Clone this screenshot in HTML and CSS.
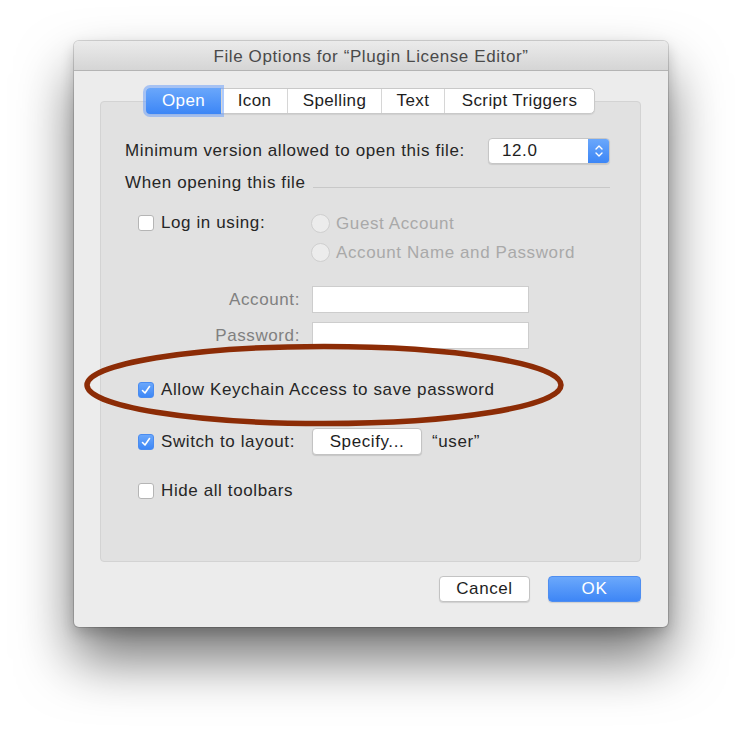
FILE: index.html
```html
<!DOCTYPE html>
<html>
<head>
<meta charset="utf-8">
<link rel="stylesheet" href="styles.css">
</head>
<body>
<div class="window">
  <div class="titlebar">File Options for “Plugin License Editor”</div>
  <div class="wbody">
    <div class="tabs">
      <span class="tab sel">Open</span><span class="tab">Icon</span><span class="tab">Spelling</span><span class="tab">Text</span><span class="tab">Script Triggers</span>
    </div>
    <div class="tabbox">
      <div class="row r-min">
        <span class="lbl">Minimum version allowed to open this file:</span>
        <span class="popup"><span class="pv">12.0</span><span class="stepper"><svg width="10" height="14" viewBox="0 0 10 14"><path d="M2 5 L5 2 L8 5 M2 9 L5 12 L8 9" fill="none" stroke="#fff" stroke-width="1.4" stroke-linecap="round" stroke-linejoin="round"/></svg></span></span>
      </div>
      <div class="row r-when"><span class="lbl">When opening this file</span><span class="sep"></span></div>
      <div class="r-login">
        <div class="cbrow"><span class="cb"></span><span class="lbl">Log in using:</span></div>
        <div class="radios">
          <div class="radrow"><span class="radio"></span><span class="dis">Guest Account</span></div>
          <div class="radrow"><span class="radio"></span><span class="dis">Account Name and Password</span></div>
        </div>
      </div>
      <div class="field-row r-acc"><span class="flbl">Account:</span><span class="field"></span></div>
      <div class="field-row r-pw"><span class="flbl">Password:</span><span class="field"></span></div>
      <div class="cbrow r-key"><span class="cb on"><svg width="12" height="12" viewBox="0 0 12 12"><path d="M2.5 6.5 L5 9 L9.5 2.5" fill="none" stroke="#fff" stroke-width="1.6" stroke-linecap="round" stroke-linejoin="round"/></svg></span><span class="lbl">Allow Keychain Access to save password</span></div>
      <div class="cbrow r-switch"><span class="cb on"><svg width="12" height="12" viewBox="0 0 12 12"><path d="M2.5 6.5 L5 9 L9.5 2.5" fill="none" stroke="#fff" stroke-width="1.6" stroke-linecap="round" stroke-linejoin="round"/></svg></span><span class="lbl sw">Switch to layout:</span><span class="btn spec">Specify...</span><span class="lbl user">“user”</span></div>
      <div class="cbrow r-hide"><span class="cb"></span><span class="lbl">Hide all toolbars</span></div>
    </div>
    <div class="buttons">
      <span class="btn cancel">Cancel</span>
      <span class="btn ok">OK</span>
    </div>
  </div>
  <svg class="oval" width="500" height="100" viewBox="0 0 500 100"><ellipse cx="250" cy="50" rx="237" ry="38.5" fill="none" stroke="#8c2c06" stroke-width="5.5"/></svg>
</div>
</body>
</html>
```

FILE: styles.css
```css
html { min-height: 100%; background: #fff; }
body {
  margin: 0;
  padding: 0 0 1px;
  min-height: 733px;
  box-sizing: border-box;
  background: #fff;
  font-family: "Liberation Sans", Arial, sans-serif;
  font-size: 17px;
  color: #262626;
  letter-spacing: 0.6px;
}
.window {
  position: relative;
  margin: 41px 0 0 74px;
  width: 594px;
  height: 586px;
  background: #ececec;
  border-radius: 5px;
  box-shadow: 0 0 0 1px rgba(0,0,0,0.14), 0 32px 55px rgba(0,0,0,0.55), 0 6px 14px rgba(0,0,0,0.18);
}
.titlebar {
  height: 29px;
  line-height: 31px;
  text-align: center;
  color: #4a4a4a;
  font-size: 17px;
  letter-spacing: 0.6px;
  background: linear-gradient(#ebebeb, #d5d5d5);
  border-bottom: 1px solid #b4b4b4;
  border-radius: 5px 5px 0 0;
}
.wbody { padding: 17px 27px 0 26px; }
.tabs {
  position: relative;
  z-index: 1;
  display: flex;
  width: max-content;
  margin: 0 auto 0 46px;
  height: 24px;
  background: #fff;
  border: 1px solid #c9c9c9;
  border-radius: 5px;
  box-shadow: 0 1px 1px rgba(0,0,0,0.08);
  letter-spacing: 0.4px;
}
.tab {
  display: flex;
  align-items: center;
  justify-content: center;
  height: 24px;
  border-left: 1px solid #d6d6d6;
  color: #1e1e1e;
}
.tab:first-child { border-left: none; }
.tab:nth-child(1) { width: 75px; }
.tab:nth-child(2) { width: 65px; }
.tab:nth-child(3) { width: 93px; }
.tab:nth-child(4) { width: 62px; }
.tab:nth-child(5) { width: 149px; }
.tab.sel {
  color: #fff;
  background: linear-gradient(#6aa7fb, #3c86f6);
  border-radius: 4px 0 0 4px;
  box-shadow: 0 0 0 3px rgba(110,160,250,0.55);
  margin: -1px 0 -1px -1px;
  height: 26px;
}
.tabbox {
  margin-top: -13px;
  width: 541px;
  box-sizing: border-box;
  height: 461px;
  background: #e1e1e1;
  border: 1px solid #d3d3d3;
  border-radius: 4px;
  padding: 36px 30px 0 24px;
}
.row { display: flex; align-items: center; }
.r-min { height: 26px; }
.r-min .lbl { width: 363px; }
.popup {
  display: flex;
  width: 122px;
  height: 26px;
  box-sizing: border-box;
  background: #fff;
  border: 1px solid #c6c6c6;
  border-radius: 4px;
  overflow: hidden;
  box-shadow: 0 1px 1px rgba(0,0,0,0.1);
}
.pv { flex: 1; padding-left: 13px; line-height: 24px; color: #1e1e1e; }
.stepper {
  width: 21px;
  background: linear-gradient(#6aa7fb, #3c86f6);
  display: flex; align-items: center; justify-content: center;
}
.r-when { height: 20px; margin-top: 9px; }
.sep { flex: 1; height: 1px; background: #c8c8c8; margin: 8px 0 0 8px; }
.r-login { display: flex; margin-top: 16px; }
.cbrow { display: flex; align-items: center; height: 28px; padding-left: 13px; }
.cb {
  width: 16px; height: 16px;
  box-sizing: border-box;
  background: #fff;
  border: 1px solid #b5b5b5;
  border-radius: 3px;
  margin-right: 7px;
  display: flex; align-items: center; justify-content: center;
  flex: none;
}
.cb.on {
  background: linear-gradient(#6aa7fb, #3d87f6);
  border-color: #4a8cf0;
}
.r-login .cbrow { width: 173px; }
.radios { display: flex; flex-direction: column; }
.radrow { display: flex; align-items: center; height: 29px; }
.radio {
  width: 19px; height: 19px;
  box-sizing: border-box;
  border: 1px solid #cfcfcf;
  border-radius: 50%;
  background: #ececec;
  margin-right: 6px;
}
.dis { color: #a9a9a9; }
.field-row { display: flex; align-items: center; height: 27px; }
.r-acc { margin-top: 19px; }
.r-pw { margin-top: 9px; }
.flbl { width: 175px; text-align: right; color: #808080; margin-right: 12px; }
.field {
  width: 217px; height: 27px;
  box-sizing: border-box;
  background: #fff;
  border: 1px solid #cdcdcd;
}
.r-key { height: 20px; margin-top: 31px; }
.r-switch { height: 27px; margin-top: 28px; }
.r-hide { height: 20px; margin-top: 26px; }
.sw { width: 151px; }
.btn {
  display: flex; align-items: center; justify-content: center;
  box-sizing: border-box;
  background: #fff;
  border: 1px solid #c3c3c3;
  border-radius: 4px;
  box-shadow: 0 1px 1px rgba(0,0,0,0.12);
  color: #1e1e1e;
}
.spec { width: 110px; height: 27px; }
.user { margin-left: 10px; }
.buttons {
  display: flex;
  justify-content: flex-end;
  gap: 18px;
  margin-top: 14px;
}
.cancel { width: 91px; height: 26px; }
.ok {
  width: 93px; height: 26px;
  color: #fff;
  background: linear-gradient(#6ba8fb, #3e86f6);
  border-color: #4f8ef0;
}
.oval { position: absolute; left: 0; top: 294px; }
```
